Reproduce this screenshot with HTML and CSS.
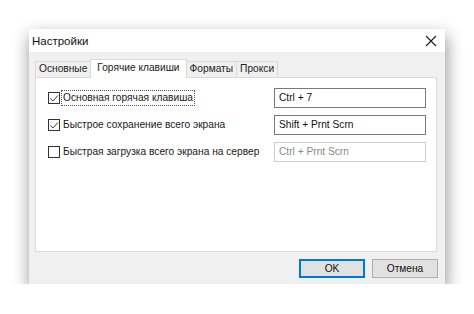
FILE: index.html
```html
<!DOCTYPE html>
<html lang="ru">
<head>
    <meta charset="UTF-8">
    <title>Настройки</title>
    <link rel="stylesheet" href="styles.css">
</head>
<body>
    <div class="dialog">
        <div class="titlebar">
            <span class="title">Настройки</span>
            <svg class="close" width="12" height="12" viewBox="0 0 12 12">
                <path d="M1 1 L11 11 M11 1 L1 11" stroke="#1a1a1a" stroke-width="1.1" fill="none"/>
            </svg>
        </div>

        <div class="dialog-body">
            <div class="tabs">
                <div class="tab">Основные</div>
                <div class="tab active">Горячие клавиши</div>
                <div class="tab">Форматы</div>
                <div class="tab">Прокси</div>
            </div>

            <div class="panel">
                <div class="hotkey-row">
                    <label class="check">
                        <span class="box checked"><svg width="11" height="11" viewBox="0 0 11 11"><path d="M1.5 5.5 L4.3 8.3 L9.8 2.2" stroke="#333" stroke-width="1.1" fill="none"/></svg></span>
                        <span class="label focused">Основная горячая клавиша</span>
                    </label>
                    <div class="field">Ctrl + 7</div>
                </div>
                <div class="hotkey-row">
                    <label class="check">
                        <span class="box checked"><svg width="11" height="11" viewBox="0 0 11 11"><path d="M1.5 5.5 L4.3 8.3 L9.8 2.2" stroke="#333" stroke-width="1.1" fill="none"/></svg></span>
                        <span class="label">Быстрое сохранение всего экрана</span>
                    </label>
                    <div class="field">Shift + Prnt Scrn</div>
                </div>
                <div class="hotkey-row">
                    <label class="check">
                        <span class="box"></span>
                        <span class="label">Быстрая загрузка всего экрана на сервер</span>
                    </label>
                    <div class="field disabled">Ctrl + Prnt Scrn</div>
                </div>
            </div>

            <div class="buttons">
                <button class="btn default">OK</button>
                <button class="btn">Отмена</button>
            </div>
        </div>
    </div>
</body>
</html>
```

FILE: styles.css
```css
* {
    margin: 0;
    padding: 0;
    box-sizing: border-box;
}

body {
    font-family: "Liberation Sans", Arial, sans-serif;
    font-size: 10.2px;
    color: #1a1a1a;
    background: #ffffff;
    padding: 29px 0 0 29px;
}

.dialog {
    width: 416px;
    height: 255px;
    background: #f0f0f0;
    box-shadow: 1px 7px 16px rgba(0, 0, 0, 0.45);
    display: flex;
    flex-direction: column;
}

.titlebar {
    height: 23px;
    background: #ffffff;
    display: flex;
    align-items: center;
    justify-content: space-between;
    padding: 0 8px 0 3px;
}

.title {
    font-size: 11.5px;
    color: #111;
}

.dialog-body {
    flex: 1;
    display: flex;
    flex-direction: column;
    padding: 7px 8px 6px 6px;
}

.tabs {
    display: flex;
    align-items: flex-end;
    height: 18px;
    padding-left: 1px;
}

.tab {
    height: 16px;
    line-height: 14px;
    padding: 0 3px;
    border: 1px solid #d9d9d9;
    border-bottom: none;
    background: #f0f0f0;
    color: #222;
    margin-left: -1px;
    white-space: nowrap;
}

.tab.active {
    height: 19px;
    line-height: 15px;
    background: #ffffff;
    padding: 0 6px;
    margin-bottom: -1px;
    position: relative;
    z-index: 1;
}

.panel {
    height: 175px;
    background: #ffffff;
    border: 1px solid #d9d9d9;
    padding: 10px 10px 0 12px;
    display: flex;
    flex-direction: column;
    gap: 7px;
}

.hotkey-row {
    display: flex;
    align-items: center;
    justify-content: space-between;
    height: 20px;
}

.check {
    display: flex;
    align-items: center;
    gap: 1px;
    white-space: nowrap;
}

.box {
    flex-shrink: 0;
    width: 12px;
    height: 12px;
    border: 1px solid #333;
    background: #fff;
    display: flex;
    align-items: center;
    justify-content: center;
}

.label {
    padding: 0 1px;
    border: 1px dotted transparent;
    line-height: 14px;
}

.label.focused {
    border-color: #555;
}

.field {
    flex-shrink: 0;
    width: 152px;
    height: 20px;
    border: 1px solid #7a7a7a;
    padding: 0 4px;
    line-height: 18px;
    color: #111;
    white-space: nowrap;
}

.field.disabled {
    border-color: #cccccc;
    color: #8a8a8a;
}

.buttons {
    display: flex;
    justify-content: flex-end;
    gap: 7px;
    margin-top: auto;
    margin-right: -1px;
}

.btn {
    width: 66px;
    height: 19px;
    font-family: inherit;
    font-size: 10.2px;
    color: #111;
    background: #e1e1e1;
    border: 1px solid #adadad;
}

.btn.default {
    border: 2px solid #0078d7;
}
```
